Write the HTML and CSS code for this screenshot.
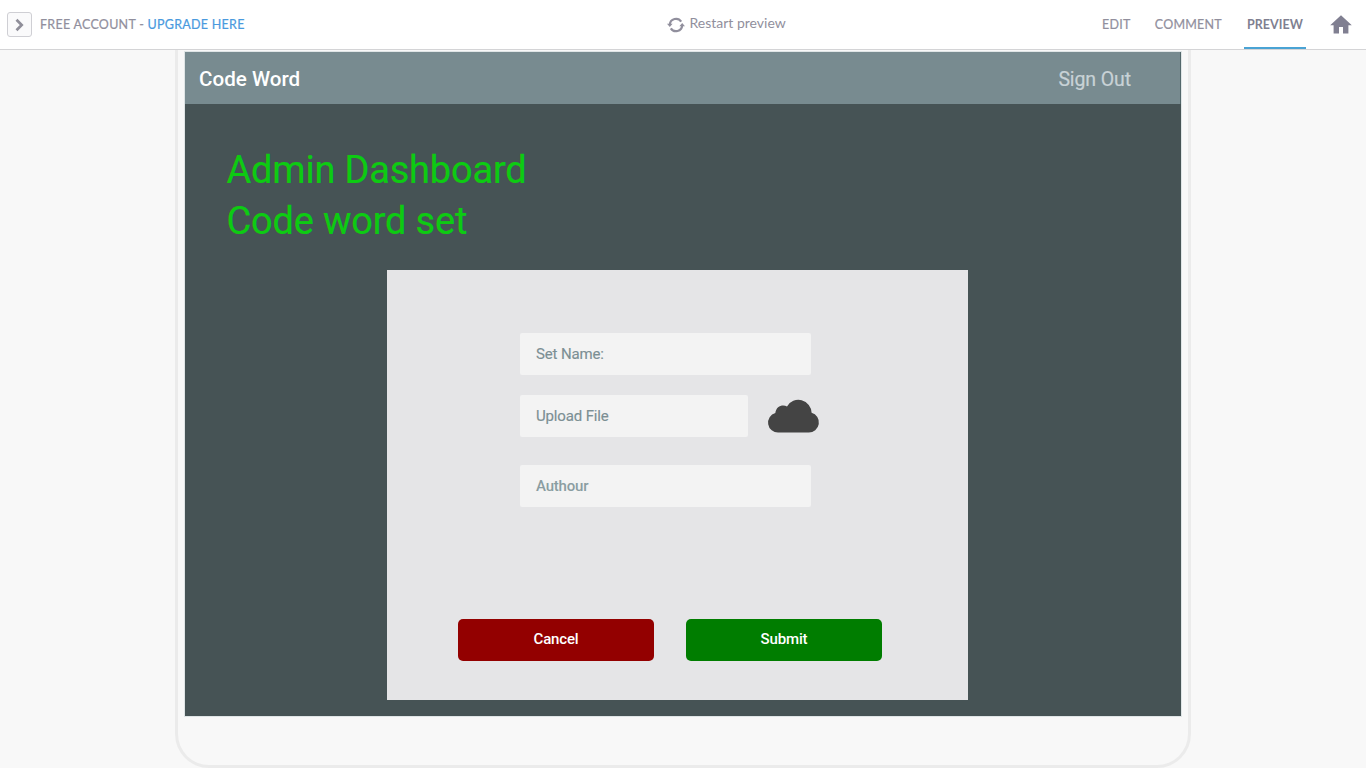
FILE: index.html
```html
<!DOCTYPE html>
<html lang="en">
<head>
<meta charset="utf-8">
<title>Code Word - Preview</title>
<link rel="stylesheet" href="styles.css">
</head>
<body>
<header class="topbar">
  <div class="account">
    <button class="expand" aria-label="Expand"><svg width="10" height="14" viewBox="0 0 10 14"><path d="M1.5 1.8 6.7 7 1.5 12.2" fill="none" stroke="#8f8e99" stroke-width="2.7"/></svg></button>
    <span class="plan">FREE ACCOUNT - <a class="upgrade">UPGRADE HERE</a></span>
  </div>
  <div class="restart">
    <svg class="restart-icon" width="18" height="16" viewBox="0 0 18 16"><g fill="none" stroke="#918f9d" stroke-width="2.2"><path d="M2.8 7.6A6.2 6.2 0 0 1 14.2 4.7"/><path d="M15.2 8.4A6.2 6.2 0 0 1 3.8 11.3"/></g><path d="M0 6.8h5.6L2.8 10zM12.4 9.2h5.6L15.2 6z" fill="#918f9d"/></svg>
    <span class="restart-label">Restart preview</span>
  </div>
  <nav class="modes">
    <a class="mode mode-edit">EDIT</a>
    <a class="mode mode-comment">COMMENT</a>
    <a class="mode mode-active">PREVIEW</a>
    <svg class="home" width="22" height="19" viewBox="0 0 22 19"><path d="M11 .3 21.8 10.3H18.4V18.6H13V12H9V18.6H3.6V10.3H.2L11 .3z" fill="#807f91"/></svg>
  </nav>
</header>
<main class="stage">
  <div class="device">
    <section class="screen">
      <div class="appbar">
        <span class="brand">Code Word</span>
        <span class="signout">Sign Out</span>
      </div>
      <h1 class="title"><span class="title-main">Admin Dashboard</span><br><span class="title-sub">Code word set</span></h1>
      <div class="panel">
        <div class="field"><span class="label-name">Set Name:</span></div>
        <div class="upload">
          <div class="field field-short"><span class="label-file">Upload File</span></div>
          <svg class="cloud" width="51" height="34" viewBox="0 0 51 34"><path d="M10.4 33.6A10 10 0 0 1 7.3 14C8 9 11.5 6.6 15.2 6.6Q17.4 6.6 19 7.4A13.2 13.2 0 0 1 43.6 13.8A10.1 10.1 0 0 1 40.5 33.6Z" fill="#444"/></svg>
        </div>
        <div class="field field-author"><span class="label-author">Authour</span></div>
        <div class="actions">
          <button class="btn cancel"><span>Cancel</span></button>
          <button class="btn submit"><span>Submit</span></button>
        </div>
      </div>
    </section>
  </div>
</main>
</body>
</html>
```
FILE: styles.css
```css
* { box-sizing: border-box; }
body { margin: 0; height: 768px; overflow: hidden; background: #f8f8f8; font-family: Roboto, sans-serif; }
button { margin: 0; padding: 0; border: 0; font-family: inherit; }
.topbar { height: 50px; display: grid; grid-template-columns: 1fr auto 1fr; background: #fff; border-bottom: 1px solid #d4d4d6; font-family: Lato, sans-serif; color: #918f9d; }
.account { display: flex; align-items: center; padding-left: 7px; }
.expand { width: 25px; height: 25px; display: grid; place-items: center; background: #fafafb; border: 1px solid #cfcfd4; border-radius: 3px; }
.plan { margin-left: 8px; font-size: 12.5px; letter-spacing: .27px; white-space: pre; -webkit-text-stroke: .2px; }
.upgrade { color: #4a9ade; }
.restart { display: flex; align-items: center; width: 119px; margin-left: 86px; white-space: nowrap; }
.restart-icon { flex: none; margin: 1px 5px 0 0; }
.restart-label { font-size: 14px; padding-bottom: 4px; }
.modes { display: flex; justify-content: flex-end; padding-right: 14px; font-size: 12.5px; line-height: 49px; letter-spacing: .25px; -webkit-text-stroke: .2px; }
.mode-comment { margin: 0 22px 0 24px; }
.mode-active { width: 62px; height: 49px; border-bottom: 2px solid #4aa3d4; text-align: center; color: #807f91; font-weight: 700; letter-spacing: .05px; -webkit-text-stroke: 0; }
.home { margin: 15px 0 0 24px; }
.stage { display: flex; justify-content: center; height: 718px; }
.device { width: 1016px; height: 718px; border: 3px solid #ebebeb; border-top: 0; border-radius: 0 0 34px 34px; padding: 2px 7px 0; }
.screen { width: 996px; height: 664px; background: #465355; box-shadow: 0 0 0 1px #dfe5e6; }
.appbar { height: 52px; display: flex; justify-content: space-between; align-items: center; background: #788b90; padding: 1px 49px 0 14px; font-size: 20px; border-right: 1px solid #53676b; }
.brand { color: #fff; font-weight: 500; font-size: 20.6px; }
.signout { color: #c8d2d6; font-size: 19.5px; letter-spacing: -.1px; padding-top: 1px; -webkit-text-stroke: .2px; }
.title { margin: 41px 0 0 41.5px; color: #0dcb12; font-size: 38px; font-weight: 400; line-height: 51px; height: 125px; letter-spacing: -.2px; white-space: nowrap; -webkit-text-stroke: .2px; }
.panel { width: 581px; height: 430px; margin-left: 202px; padding: 63px 0 0 133px; background: #e5e5e7; }
.field { width: 291px; height: 42px; display: flex; align-items: center; padding-left: 16px; background: #f3f3f3; border-radius: 2px; color: #7c8f94; font-size: 15px; letter-spacing: -.15px; -webkit-text-stroke: .15px; }
.field-short { width: 228px; }
.upload { display: flex; margin-top: 20px; }
.cloud { margin: 4px 0 0 20px; overflow: visible; }
.field-author { margin-top: 28px; }
.label-author { color: #8a9da1; font-weight: 500; letter-spacing: -.2px; -webkit-text-stroke: 0; }
.actions { display: flex; gap: 32px; margin: 112px 0 0 -62px; }
.btn { width: 196px; height: 42px; border-radius: 5px; color: #fff; font-size: 15px; font-weight: 500; letter-spacing: -.15px; padding-bottom: 2px; }
.cancel { background: #930000; }
.submit { background: #007d00; }
```
